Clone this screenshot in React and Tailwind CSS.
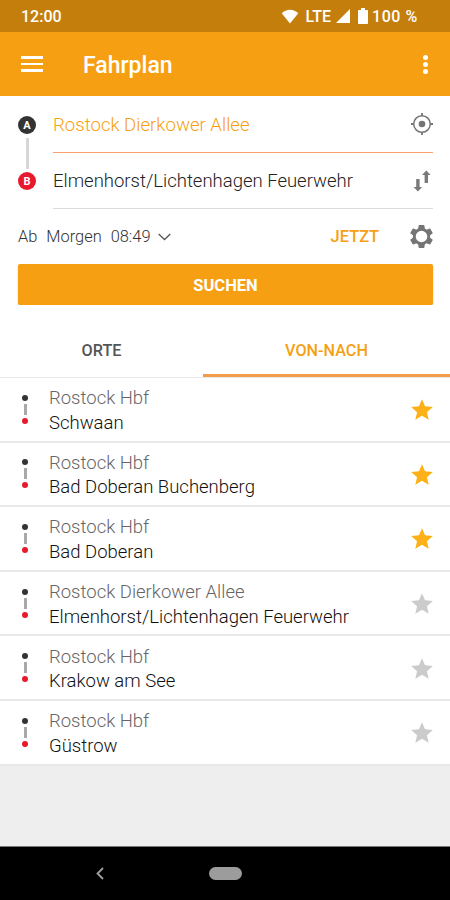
import React, { useState } from 'react';
import { MdStar } from 'react-icons/md';

const INITIAL_ROUTES = [
  { from: 'Rostock Hbf', to: 'Schwaan', favorite: true },
  { from: 'Rostock Hbf', to: 'Bad Doberan Buchenberg', favorite: true },
  { from: 'Rostock Hbf', to: 'Bad Doberan', favorite: true },
  { from: 'Rostock Dierkower Allee', to: 'Elmenhorst/Lichtenhagen Feuerwehr', favorite: false },
  { from: 'Rostock Hbf', to: 'Krakow am See', favorite: false },
  { from: 'Rostock Hbf', to: 'Güstrow', favorite: false },
];

function StatusBar() {
  return (
    <div className="h-8 shrink-0 bg-[#c47e0c] text-white flex items-center justify-between pl-[21px] pr-8 text-[16px] font-medium">
      <span className="pt-[2px]">12:00</span>
      <div className="flex items-center">
        <svg width="18" height="15" viewBox="0 0 18 15" fill="currentColor">
          <path d="M9 14.5 .7 4.2C3 2 6 .8 9 .8s6 1.2 8.3 3.4z" />
        </svg>
        <span className="ml-[6px] pt-[2px]">LTE</span>
        <svg className="ml-[5px]" width="14" height="14" viewBox="0 0 14 14" fill="currentColor">
          <path d="M14 0v14H0z" />
        </svg>
        <svg className="ml-[8px]" width="10" height="16" viewBox="0 0 10 16" fill="currentColor">
          <path d="M3 0h4v2h2c.6 0 1 .4 1 1v12c0 .6-.4 1-1 1H1c-.6 0-1-.4-1-1V3c0-.6.4-1 1-1h2z" />
        </svg>
        <span className="ml-[4px] pt-[2px] tracking-[0.6px]">100 %</span>
      </div>
    </div>
  );
}

function Header() {
  return (
    <header className="h-16 shrink-0 bg-[#f79f12] text-white flex items-center pl-[21px] pr-[21px]">
      <button className="w-[22px] flex flex-col gap-[4px]">
        <span className="h-[2.5px] bg-white" />
        <span className="h-[2.5px] bg-white" />
        <span className="h-[2.5px] bg-white" />
      </button>
      <h1 className="ml-10 flex-1 text-[23px] font-medium pt-[4px]">Fahrplan</h1>
      <button className="w-[8px] flex flex-col items-center gap-[2px]">
        <span className="size-[5px] rounded-full bg-white" />
        <span className="size-[5px] rounded-full bg-white" />
        <span className="size-[5px] rounded-full bg-white" />
      </button>
    </header>
  );
}

function LocateIcon() {
  return (
    <svg width="22" height="22" viewBox="0 0 22 22" fill="none" stroke="#757575" strokeWidth="1.5">
      <circle cx="11" cy="11" r="8.3" />
      <circle cx="11" cy="11" r="3.3" fill="#757575" stroke="none" />
      <path d="M11 0v3M11 19v3M0 11h3M19 11h3" strokeWidth="1.8" />
    </svg>
  );
}

function SwapIcon() {
  return (
    <svg width="22" height="22" viewBox="0 0 22 22" fill="#7a7a7a">
      <path d="M13.6 13V5H11L15.3.4 19.6 5H17v8z" />
      <path d="M5.2 9h3.4v8h2.6l-4.3 4.6L2.6 17h2.6z" />
    </svg>
  );
}

function GearIcon() {
  return (
    <svg width="23" height="23" viewBox="2 2 20 20" fill="#757575" fillRule="evenodd">
      <path d="M19.43 12.98c.04-.32.07-.64.07-.98s-.03-.66-.07-.98l2.11-1.65c.19-.15.24-.42.12-.64l-2-3.46c-.12-.22-.39-.3-.61-.22l-2.49 1c-.52-.4-1.08-.73-1.69-.98l-.38-2.65A.49.49 0 0 0 14 2h-4c-.25 0-.46.18-.49.42l-.38 2.65c-.61.25-1.17.59-1.69.98l-2.49-1c-.23-.09-.49 0-.61.22l-2 3.46c-.13.22-.07.49.12.64l2.11 1.65c-.04.32-.07.65-.07.98s.03.66.07.98l-2.11 1.65c-.19.15-.24.42-.12.64l2 3.46c.12.22.39.3.61.22l2.49-1c.52.4 1.08.73 1.69.98l.38 2.65c.03.24.24.42.49.42h4c.25 0 .46-.18.49-.42l.38-2.65c.61-.25 1.17-.59 1.69-.98l2.49 1c.23.09.49 0 .61-.22l2-3.46c.12-.22.07-.49-.12-.64zM12 17a5 5 0 1 1 0-10 5 5 0 0 1 0 10z" />
    </svg>
  );
}

function SearchForm() {
  return (
    <section className="shrink-0 bg-white px-[18px] pr-[17px]">
      <div className="flex">
        <div className="w-[35px] shrink-0 flex flex-col items-start pt-5">
          <div className="w-[18px] flex flex-col items-center">
            <span className="size-[18px] rounded-full bg-[#333] text-white text-[11px] leading-none font-bold flex items-center justify-center">A</span>
            <span className="w-[3px] h-[31px] my-[3.5px] bg-[#d6d6d6]" />
            <span className="size-[18px] rounded-full bg-[#e8192c] text-white text-[11px] leading-none font-bold flex items-center justify-center">B</span>
          </div>
        </div>
        <div className="flex-1">
          <div className="h-[57px] flex items-center justify-between border-b-[1.5px] border-[#f9a070] text-[#f79f12]">
            <span className="text-[18.6px] font-light pt-[4px]">Rostock Dierkower Allee</span>
            <LocateIcon />
          </div>
          <div className="h-14 flex items-center justify-between border-b-[1.5px] border-[#dcdcdc] text-[#222]">
            <span className="text-[18.5px] font-light pt-[3px]">Elmenhorst/Lichtenhagen Feuerwehr</span>
            <SwapIcon />
          </div>
        </div>
      </div>
      <div className="h-[55px] flex items-center text-[16.4px] font-light text-[#333]">
        <span className="pt-[2px]">Ab</span>
        <span className="ml-[9px] pt-[2px]">Morgen</span>
        <span className="ml-[9px] pt-[2px]">08:49</span>
        <svg className="ml-2" width="13" height="8" viewBox="0 0 13 8" fill="none" stroke="#555" strokeWidth="1.3">
          <path d="m.7 1 5.8 5.5L12.3 1" />
        </svg>
        <span className="ml-auto text-[16.4px] font-medium text-[#f79f12] pt-[2px]">JETZT</span>
        <span className="ml-[31px]">
          <GearIcon />
        </span>
      </div>
      <button className="block w-full h-[41px] pt-[3px] rounded-[2px] bg-[#f79f12] text-white text-[16.5px] font-bold shadow-[0_1px_2px_rgba(0,0,0,0.2)]">
        SUCHEN
      </button>
    </section>
  );
}

function Tabs({ active, onChange }) {
  return (
    <div className="h-[73px] shrink-0 bg-white flex pt-[19px] text-[16.2px] font-medium border-b border-[#e8e8e8]">
      <button
        onClick={() => onChange('orte')}
        className={`w-[203px] pt-[4px] border-b-[3px] ${active === 'orte' ? 'text-[#f79f12] border-[#f19d4c]' : 'text-[#555] border-transparent'}`}
      >
        ORTE
      </button>
      <button
        onClick={() => onChange('von-nach')}
        className={`flex-1 pt-[4px] border-b-[3px] ${active === 'von-nach' ? 'text-[#f79f12] border-[#f19d4c]' : 'text-[#555] border-transparent'}`}
      >
        VON-NACH
      </button>
    </div>
  );
}

function RouteRow({ route, onToggle }) {
  return (
    <li className="h-[64.6px] bg-white border-b-2 border-[#e8e8e8] flex items-center pl-[22px] pr-[15px]">
      <div className="w-[6px] flex flex-col items-center">
        <span className="size-[6px] rounded-full bg-[#333]" />
        <span className="w-[3px] h-[11px] my-[3px] bg-[#a8a8a8]" />
        <span className="size-[6px] rounded-full bg-[#e8192c]" />
      </div>
      <div className="ml-[21px] flex-1 pt-[3px] text-[18.5px] leading-[24.5px] font-light">
        <p className="text-[#666]">{route.from}</p>
        <p className="text-[#111]">{route.to}</p>
      </div>
      <button onClick={onToggle} className="pt-[2px]">
        <MdStar size={26} className={route.favorite ? 'text-[#fbb117]' : 'text-[#cbcbcb]'} />
      </button>
    </li>
  );
}

function NavigationBar() {
  return (
    <nav className="h-[54px] shrink-0 bg-black border-t border-[#777] flex items-center">
      <svg className="ml-[96px]" width="8" height="13" viewBox="0 0 8 13" fill="none" stroke="#a0a0a0" strokeWidth="1.8">
        <path d="M7 1 1.5 6.5 7 12" />
      </svg>
      <span className="ml-[105px] w-[33px] h-[13px] rounded-full bg-[#9c9c9c]" />
    </nav>
  );
}

export default function App() {
  const [tab, setTab] = useState('von-nach');
  const [routes, setRoutes] = useState(INITIAL_ROUTES);

  const toggleFavorite = (index) => {
    setRoutes(routes.map((r, i) => (i === index ? { ...r, favorite: !r.favorite } : r)));
  };

  return (
    <div className="w-[450px] h-[900px] overflow-hidden bg-[#eeeeee] flex flex-col font-[Roboto,sans-serif]">
      <StatusBar />
      <Header />
      <SearchForm />
      <Tabs active={tab} onChange={setTab} />
      <ul className="flex-1">
        {routes.map((route, i) => (
          <RouteRow key={i} route={route} onToggle={() => toggleFavorite(i)} />
        ))}
      </ul>
      <NavigationBar />
    </div>
  );
}
